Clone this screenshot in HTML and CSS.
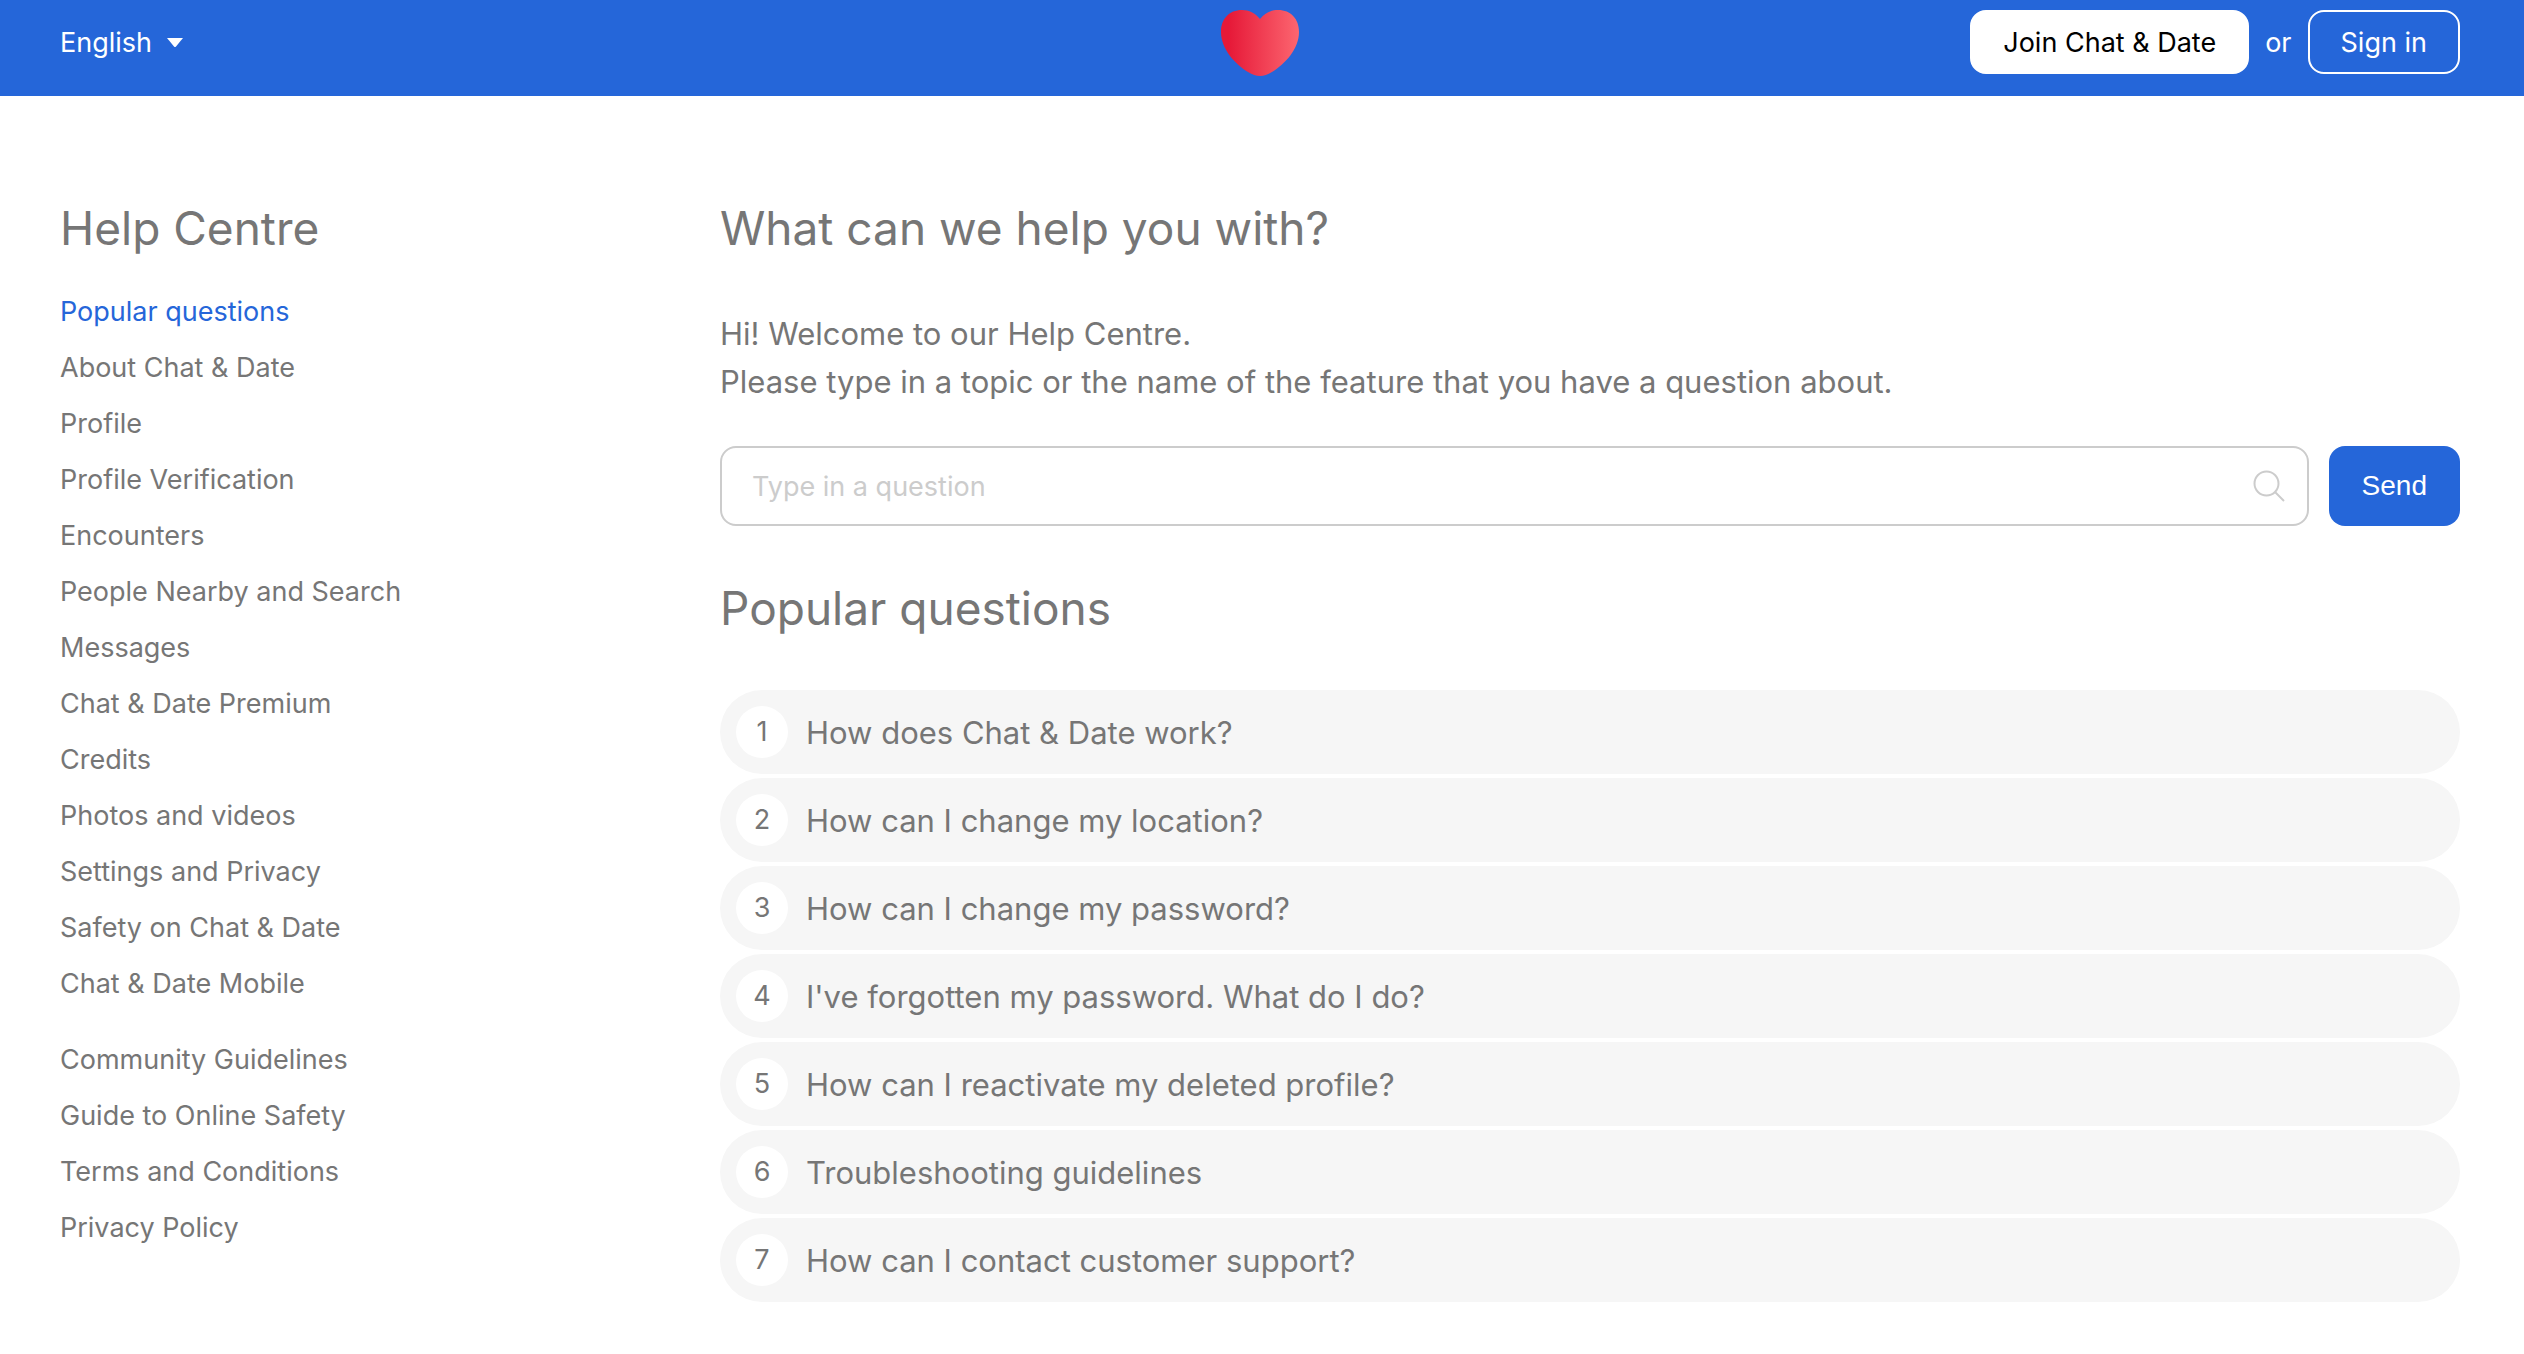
FILE: index.html
```html
<!DOCTYPE html>
<html lang="en">
<head>
    <meta charset="UTF-8">
    <meta name="viewport" content="width=device-width, initial-scale=1.0">
    <title>Help Centre</title>
    <link rel="stylesheet" href="styles.css">
</head>
<body>
    <header class="header">
        <div class="lang">
            <select class="lang-select" aria-label="Language">
                <option>English</option>
            </select>
            <svg width="16" height="9" viewBox="0 0 16 9" aria-hidden="true"><path d="M0 0h16L9 8.500q-1 1-2 0z" fill="#fff"/></svg>
        </div>
        <a class="logo" href="#" aria-label="Home">
            <svg width="78" height="66" viewBox="0 0 78 66" aria-hidden="true">
                <defs>
                    <linearGradient id="heart" x1="0" x2="1" y1="0" y2="0">
                        <stop offset="0.1" stop-color="#e61938"/>
                        <stop offset="1" stop-color="#fc6670"/>
                    </linearGradient>
                </defs>
                <path d="M39 9C34 3 28 0 21 0 8 0 0 9 0 22c0 17 14 32 27 40 4.500 2.700 8 4 12 4s7.500-1.300 12-4c13-8 27-23 27-40C78 9 70 0 57 0c-7 0-13 3-18 9z" fill="url(#heart)"/>
            </svg>
        </a>
        <div class="sign">
            <button class="btn btn-join" type="button">Join Chat &amp; Date</button>
            <span>or</span>
            <button class="btn btn-signin" type="button">Sign in</button>
        </div>
    </header>
    <div class="page">
        <nav class="sidebar">
            <h1 class="title">Help Centre</h1>
            <ul class="menu">
                <li><a class="active" href="#">Popular questions</a></li>
                <li><a href="#">About Chat &amp; Date</a></li>
                <li><a href="#">Profile</a></li>
                <li><a href="#">Profile Verification</a></li>
                <li><a href="#">Encounters</a></li>
                <li><a href="#">People Nearby and Search</a></li>
                <li><a href="#">Messages</a></li>
                <li><a href="#">Chat &amp; Date Premium</a></li>
                <li><a href="#">Credits</a></li>
                <li><a href="#">Photos and videos</a></li>
                <li><a href="#">Settings and Privacy</a></li>
                <li><a href="#">Safety on Chat &amp; Date</a></li>
                <li><a href="#">Chat &amp; Date Mobile</a></li>
            </ul>
            <ul class="menu">
                <li><a href="#">Community Guidelines</a></li>
                <li><a href="#">Guide to Online Safety</a></li>
                <li><a href="#">Terms and Conditions</a></li>
                <li><a href="#">Privacy Policy</a></li>
            </ul>
        </nav>
        <main class="content">
            <h2 class="title">What can we help you with?</h2>
            <p class="intro">Hi! Welcome to our Help Centre.<br>Please type in a topic or the name of the feature that you have a question about.</p>
            <form class="search">
                <label class="search-field">
                    <input type="text" placeholder="Type in a question" aria-label="Type in a question">
                    <svg width="32" height="32" viewBox="0 0 32 32" fill="none" stroke="#ccc" stroke-width="2" aria-hidden="true"><circle cx="13.500" cy="13.500" r="12"/><path d="M22 22l9 9"/></svg>
                </label>
                <button class="btn-send" type="submit">Send</button>
            </form>
            <h2 class="title">Popular questions</h2>
            <ol class="questions">
                <li><a href="#"><span class="num">1</span>How does Chat &amp; Date work?</a></li>
                <li><a href="#"><span class="num">2</span>How can I change my location?</a></li>
                <li><a href="#"><span class="num">3</span>How can I change my password?</a></li>
                <li><a href="#"><span class="num">4</span>I've forgotten my password. What do I do?</a></li>
                <li><a href="#"><span class="num">5</span>How can I reactivate my deleted profile?</a></li>
                <li><a href="#"><span class="num">6</span>Troubleshooting guidelines</a></li>
                <li><a href="#"><span class="num">7</span>How can I contact customer support?</a></li>
            </ol>
        </main>
    </div>
</body>
</html>
```
FILE: styles.css
```css
*{
    box-sizing: border-box;
}
body,h1,h2,p,ul,ol{
    margin: 0;
    padding: 0;
}
body{
    font-family: Inter, "Liberation Sans", sans-serif;
    font-size: 27px;
    color: #767676;
    background: #fff;
}
li{
    list-style: none;
}
a{
    color: inherit;
    text-decoration: none;
}
button,input,select{
    font: inherit;
}
svg{
    display: block;
}
/* header */
.header{
    display: grid;
    grid-template-columns: 1fr auto 1fr;
    align-items: start;
    padding: 10px 64px 20px 60px;
    color: #fff;
    background: #2566d9;
}
.lang{
    display: flex;
    align-items: center;
    gap: 14px;
    height: 64px;
}
.lang-select{
    appearance: none;
    padding: 0;
    border: 0;
    color: #fff;
    background: none;
}
.sign{
    display: flex;
    justify-content: flex-end;
    align-items: center;
    gap: 16px;
}
.btn{
    height: 64px;
    padding: 0 31px;
    border: 2px solid #fff;
    border-radius: 16px;
}
.btn-join{
    color: #000;
    background: #fff;
}
.btn-signin{
    color: #fff;
    background: none;
}
/* page */
.page{
    display: flex;
    padding: 100px 64px 50px 60px;
}
.sidebar{
    flex: 0 0 27.5%;
}
.title{
    font-size: 46px;
    line-height: 64px;
    font-weight: 400;
}
.menu{
    padding-top: 24px;
    line-height: 56px;
}
.menu + .menu{
    padding-top: 20px;
}
.active{
    color: #2566d9;
}
.content{
    flex: 1;
}
.intro{
    padding: 50px 0 40px;
    font-size: 31px;
    line-height: 48px;
}
.search{
    display: flex;
    gap: 20px;
    margin-bottom: 50px;
}
.search-field{
    flex: 1;
    display: flex;
    align-items: center;
    height: 80px;
    padding: 0 22px 0 30px;
    border: 2px solid #ccc;
    border-radius: 16px;
}
.search-field input{
    flex: 1;
    padding: 0;
    border: 0;
    outline: 0;
    color: #767676;
    background: none;
}
.search-field input::placeholder{
    color: #ccc;
}
.btn-send{
    padding: 0 33px;
    border: 0;
    border-radius: 16px;
    font-family: "Liberation Sans", Arial, sans-serif;
    font-size: 28px;
    color: #fff;
    background: #2566d9;
}
.questions{
    display: grid;
    gap: 4px;
    padding-top: 50px;
    font-size: 31px;
}
.questions a{
    display: flex;
    align-items: center;
    gap: 18px;
    height: 84px;
    padding: 0 16px;
    border-radius: 42px;
    background: #f6f6f6;
}
.num{
    width: 52px;
    border-radius: 50%;
    font-size: 27px;
    line-height: 52px;
    text-align: center;
    background: #fff;
}
```
